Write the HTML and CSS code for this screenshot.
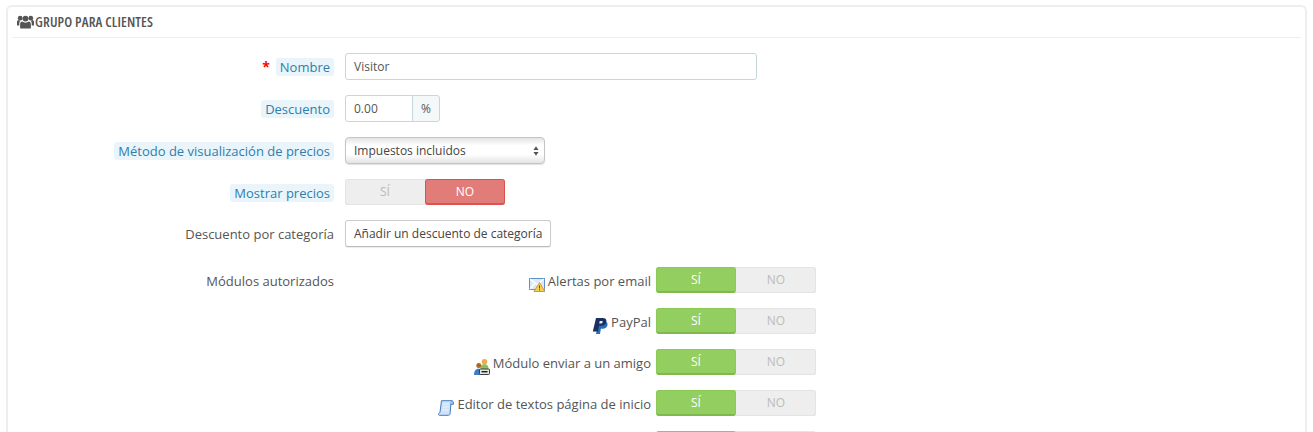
FILE: index.html
```html
<!DOCTYPE html>
<html lang="es">
<head>
<meta charset="utf-8">
<title>Grupo para clientes</title>
<link rel="stylesheet" href="styles.css">
</head>
<body>
<section class="panel">
  <h3 class="panel-heading">
    <svg class="heading-icon" viewBox="0 0 18 14" width="17" height="14" aria-hidden="true">
      <circle cx="9" cy="3.400" r="3.100"/><circle cx="3.400" cy="3" r="2.500"/><circle cx="14.600" cy="3" r="2.500"/>
      <path d="M4.200 14c-.5 0-.9-.4-.9-1V9.600c0-2 1.100-3 2.500-3 .8.7 1.900 1.200 3.200 1.200s2.400-.5 3.200-1.200c1.400 0 2.500 1 2.500 3V13c0 .6-.4 1-.9 1z"/>
      <path d="M0 9.500V7c0-1.300.8-2.100 1.800-2.100.5.4 1 .7 1.700.8-.6.6-1 1.500-1.100 2.600v2.400H.6c-.4 0-.6-.1-.6-.2zM18 9.500V7c0-1.300-.8-2.100-1.800-2.100-.5.4-1 .7-1.700.8.6.6 1 1.500 1.100 2.600v2.400h1.800c.4 0 .6-.1.6-.2z"/>
    </svg>
    <span class="heading-text">GRUPO PARA CLIENTES</span>
  </h3>

  <div class="row">
    <div class="label"><span class="req">*</span><span class="hint">Nombre</span></div>
    <div class="field"><div class="input input-wide">Visitor</div></div>
  </div>

  <div class="row">
    <div class="label"><span class="hint">Descuento</span></div>
    <div class="field">
      <div class="input-group"><div class="input input-short">0.00</div><div class="addon">%</div></div>
    </div>
  </div>

  <div class="row">
    <div class="label"><span class="hint">Método de visualización de precios</span></div>
    <div class="field">
      <div class="select">
        <span>Impuestos incluidos</span>
        <svg viewBox="0 0 7 11" width="6" height="10" aria-hidden="true"><path d="M3.500 0 6.500 4.300H.5zM3.500 11 .5 6.700h6z"/></svg>
      </div>
    </div>
  </div>

  <div class="row row-toggle">
    <div class="label"><span class="hint">Mostrar precios</span></div>
    <div class="field">
      <div class="toggle"><span class="opt">SÍ</span><span class="opt opt-no">NO</span></div>
    </div>
  </div>

  <div class="row">
    <div class="label"><span class="plain">Descuento por categoría</span></div>
    <div class="field"><div class="btn">Añadir un descuento de categoría</div></div>
  </div>

  <div class="row row-modules">
    <div class="label"><span class="plain">Módulos autorizados</span></div>
    <div class="modules">
      <div class="module">
        <div class="module-name">
          <svg class="micon" viewBox="0 0 16 15" width="16" height="15" aria-hidden="true">
            <rect x=".5" y="1.500" width="15" height="11" fill="#dbe9f9" stroke="#5f8fc9"/>
            <path d="M1 2l7 5.500L15 2M1 12l5-6M15 12l-5-6" fill="none" stroke="#fff" stroke-width="1.200"/>
            <path d="M10.500 5.500 16 14.500H5z" fill="#f6cf52" stroke="#c8912a" stroke-width=".9"/>
            <path d="M10.500 8.500v3M10.500 12.300v1.100" stroke="#6b4a10"/>
          </svg>
          <span>Alertas por email</span>
        </div>
        <div class="toggle"><span class="opt opt-si">SÍ</span><span class="opt">NO</span></div>
      </div>
      <div class="module">
        <div class="module-name">
          <svg class="micon" viewBox="0 0 16 16" width="16" height="16" aria-hidden="true">
            <path d="M6.500 3.500h5.500c2.700 0 4 1.400 3.500 3.600-.5 2.500-2.400 3.700-4.800 3.700H8.900L8 16H4z" fill="#2a6fb5"/>
            <path d="M4 0h6.500c3 0 4.300 1.400 3.900 3.700-.5 2.700-2.500 4.100-5.200 4.100H7L6 13.500H.8z" fill="#1b2f63"/>
            <path d="M7.700 3h1.700c1 0 1.500.5 1.300 1.300-.2.900-.9 1.300-1.900 1.300H7.200z" fill="#e8eef7"/>
          </svg>
          <span>PayPal</span>
        </div>
        <div class="toggle"><span class="opt opt-si">SÍ</span><span class="opt">NO</span></div>
      </div>
      <div class="module">
        <div class="module-name">
          <svg class="micon" viewBox="0 0 16 16" width="16" height="16" aria-hidden="true">
            <circle cx="10.500" cy="2.800" r="2.800" fill="#eeaa4e"/>
            <path d="M6.500 10c0-3.500 1.500-4.700 4-4.700s4 1.200 4 4.700z" fill="#8cc152"/>
            <circle cx="4.800" cy="6.600" r="2.500" fill="#a9682a"/>
            <path d="M0 16c0-4 1.800-6.200 4.500-6.200S8 12 8 16z" fill="#3d7cc4"/>
            <rect x="5.500" y="10" width="10" height="5.500" rx=".8" fill="#e4e4e4" stroke="#3c3c3c"/>
            <path d="M7.500 12.700h6" stroke="#1d1d1d" stroke-width="1.400"/>
          </svg>
          <span>Módulo enviar a un amigo</span>
        </div>
        <div class="toggle"><span class="opt opt-si">SÍ</span><span class="opt">NO</span></div>
      </div>
      <div class="module">
        <div class="module-name">
          <svg class="micon" viewBox="0 0 16 16" width="16" height="16" aria-hidden="true">
            <path d="M3.500.7h10.700c-.9.800-1.200 1.600-1.300 3l-.8 9.800c-.1 1.200-.9 1.800-2 1.800H1.400c-1 0-1.200-1-.7-1.600.5-.6 1-.9 1.300-1.600z" fill="#cfe2f8" stroke="#3f7cc2"/>
            <path d="M13 .8c1.300 0 2.400.6 2.400 1.700v1.800h-2.500" fill="#a9c9ee" stroke="#3f7cc2"/>
            <path d="M5 4h6M4.700 7h6M4.400 10h6" stroke="#eaf2fc"/>
          </svg>
          <span>Editor de textos página de inicio</span>
        </div>
        <div class="toggle"><span class="opt opt-si">SÍ</span><span class="opt">NO</span></div>
      </div>
      <div class="module">
        <div class="module-name"></div>
        <div class="toggle"><span class="opt opt-si"></span><span class="opt"></span></div>
      </div>
    </div>
  </div>
</section>
</body>
</html>
```
FILE: styles.css
```css
* { box-sizing: border-box; }
html, body { height: 432px; overflow: hidden; }
body {
  margin: 0;
  padding: 5px 6px 0 6px;
  background: #fff;
  color: #555;
  font-family: "Open Sans", sans-serif;
  font-size: 13px;
  line-height: 18px;
}
.panel {
  height: 427px;
  overflow: hidden;
  padding: 0 4px;
  border: 2px solid #eee;
  border-bottom: 0;
  border-radius: 6px 6px 0 0;
}
.panel-heading {
  display: flex;
  align-items: center;
  gap: 1px;
  height: 31px;
  margin: 0 0 15px;
  padding: 0 0 1px 5px;
  border-bottom: 1px solid #eee;
  color: #555;
  font-family: "Open Sans", sans-serif;
  font-size: 14px;
  font-stretch: 75%;
  font-weight: 600;
}
.heading-text { letter-spacing: .15px; }
.heading-icon { fill: #555; flex: none; }
.row {
  display: flex;
  align-items: flex-start;
  margin-bottom: 15px;
}
.row-toggle { margin-bottom: 14px; }
.label {
  display: flex;
  justify-content: flex-end;
  align-items: center;
  width: 322px;
  height: 27px;
  flex: none;
  padding-top: 1px;
}
.field { margin-left: 11px; display: flex; font-size: 12px; }
.hint {
  padding: 0 4px;
  border-radius: 3px;
  background: #e9f5fb;
  color: #2f7eac;
}
.req {
  margin-right: 6px;
  color: #f00;
  font-size: 14px;
  font-weight: 700;
}
.input {
  height: 27px;
  padding: 0 8px;
  border: 1px solid #c7d6db;
  border-radius: 3px;
  background: #fff;
  color: #555;
  line-height: 25px;
}
.input-wide { width: 412px; }
.input-short { width: 68px; border-radius: 3px 0 0 3px; }
.input-group { display: flex; }
.addon {
  width: 28px;
  height: 27px;
  margin-left: -1px;
  border: 1px solid #c7d6db;
  border-radius: 0 3px 3px 0;
  background: #f5f8f9;
  color: #555;
  font-size: 12px;
  line-height: 25px;
  text-align: center;
}
.select {
  display: flex;
  justify-content: space-between;
  align-items: center;
  width: 200px;
  height: 27px;
  padding: 0 8px;
  border: 1px solid #c4c4c4;
  border-radius: 4px;
  background: linear-gradient(#e4e4e4, #fff 30%, #fff 65%, #e4e4e4);
  box-shadow: 0 1px 1px rgba(0,0,0,.12);
  color: #444;
}
.select svg { fill: #555; margin-right: -3px; }
.toggle {
  display: flex;
  width: 160px;
  height: 26px;
  flex: none;
  border-radius: 3px;
  background: #eee;
  box-shadow: inset 0 0 0 1px #e4e4e4, inset 0 -1px 0 #ddd;
}
.opt {
  width: 50%;
  flex: none;
  border-radius: 3px;
  color: #bbb;
  font-size: 12px;
  line-height: 25px;
  text-align: center;
}
.opt-no {
  background: #e27c79;
  border: 1px solid #d9534f;
  border-bottom-width: 2px;
  color: #fff;
  line-height: 23px;
}
.opt-si {
  background: #93ce60;
  border: 1px solid #8bc954;
  border-bottom: 2px solid #7fb84c;
  color: #fff;
  line-height: 23px;
}
.btn {
  height: 27px;
  padding: 0 8px;
  border: 1px solid #ccc;
  border-bottom-color: #bbb;
  border-radius: 3px;
  background: #fff;
  box-shadow: 0 1px 1px rgba(0,0,0,.08);
  color: #444;
  line-height: 25px;
}
.row-modules { margin-top: 20px; margin-bottom: 0; }
.modules {
  display: flex;
  flex-direction: column;
  gap: 15px;
  margin-left: 11px;
  width: 471px;
}
.module { display: flex; align-items: flex-start; gap: 5px; }
.module-name {
  display: flex;
  justify-content: flex-end;
  align-items: center;
  gap: 3px;
  flex: 1;
  height: 26px;
  padding-top: 2px;
  color: #555;
}
.micon { flex: none; margin-top: 7px; }
```
